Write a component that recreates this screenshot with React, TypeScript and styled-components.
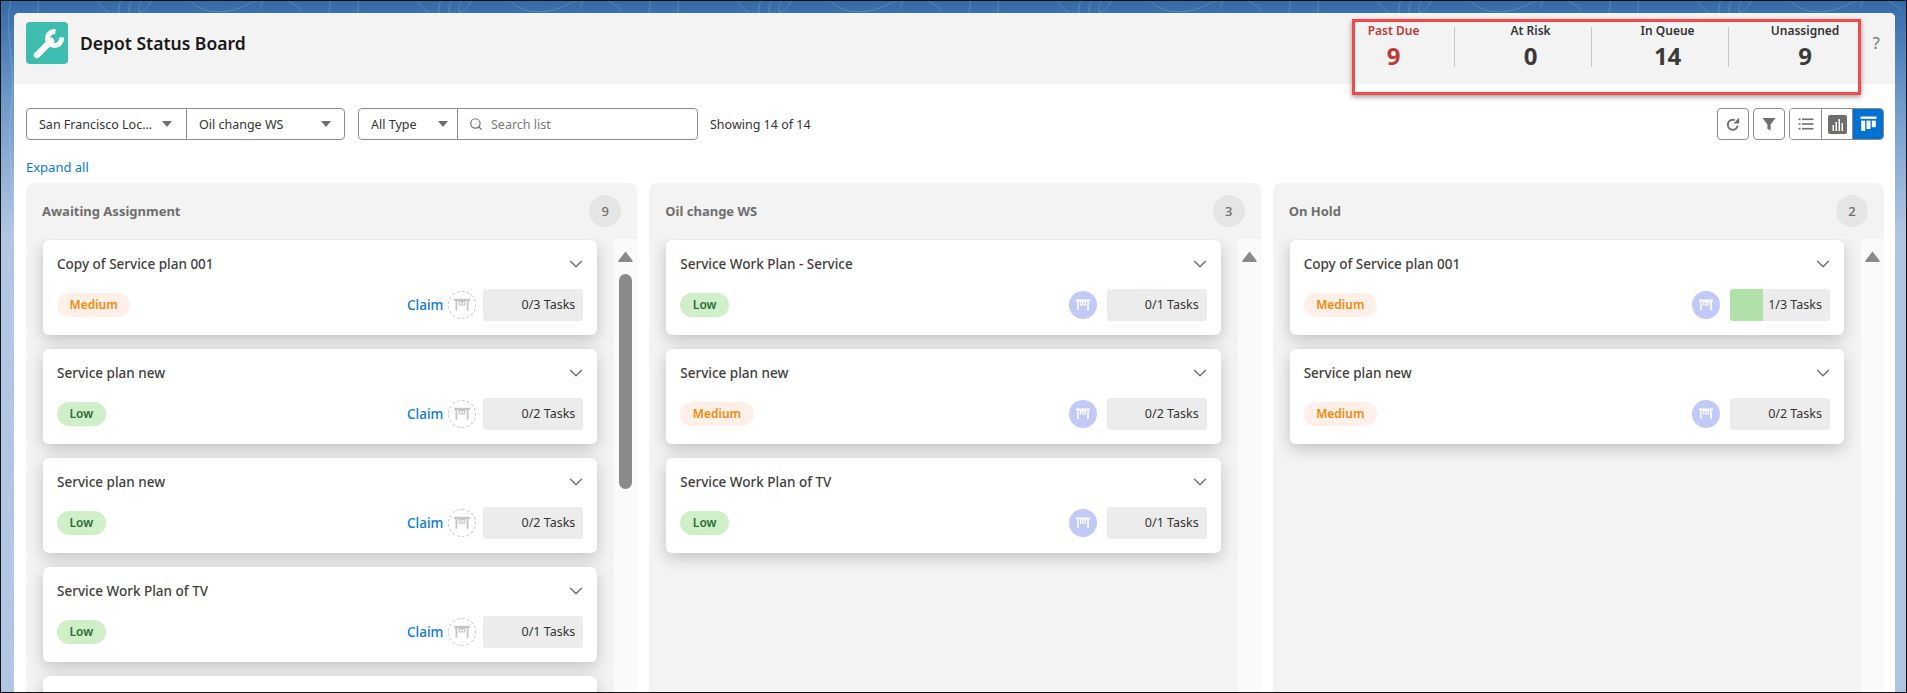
import React from "react";
import styled, { createGlobalStyle } from "styled-components";
import { ChevronDown, Search } from "lucide-react";

const GlobalStyle = createGlobalStyle`
  html, body {
    margin: 0;
    padding: 0;
    height: 693px;
    overflow: hidden;
  }
  * {
    box-sizing: border-box;
  }
  body {
    font-family: "Noto Sans", "Open Sans", Arial, sans-serif;
    color: #333;
  }
`;

const Shell = styled.div`
  position: relative;
  height: 693px;
  overflow: hidden;
  padding: 12px 11px 0 13px;
  border: 1px solid #111;
  background: linear-gradient(180deg, #356ba8 0, #6f99c9 100px, #afc5e2 230px, #afc5e2 100%);
`;

const Contours = styled.svg`
  position: absolute;
  inset: 0;
  width: 100%;
  height: 100%;
`;

const Panel = styled.div`
  position: relative;
  height: 720px;
  background: #fff;
  border-radius: 5px 5px 0 0;
`;

const Header = styled.header`
  height: 71px;
  display: flex;
  align-items: flex-start;
  padding: 9px 15px 9px 12px;
  background: #f3f3f3;
  border-radius: 5px 5px 0 0;
`;

const AppIcon = styled.div`
  width: 42px;
  height: 42px;
  border-radius: 4px;
  background: #3dbdae;
  display: flex;
  align-items: center;
  justify-content: center;
`;

const Title = styled.h1`
  margin: 0 0 0 12px;
  font-size: 17.5px;
  line-height: 42px;
  font-weight: 600;
  color: #181818;
`;

const Stats = styled.div`
  position: relative;
  margin-left: auto;
  display: flex;
  margin-top: 5px;
  height: 40px;
`;

const Annotation = styled.div`
  position: absolute;
  left: 34px;
  top: -8px;
  width: 509px;
  height: 76px;
  border: 3px solid #f4484a;
  box-shadow: 0 2px 5px rgba(0, 0, 0, 0.4);
`;

const Stat = styled.div<{ $last?: boolean }>`
  width: 137px;
  padding-left: 16px;
  text-align: center;
  border-right: ${(p) => (p.$last ? "none" : "1px solid #c9c9c9")};
`;

const StatLabel = styled.div<{ $red?: boolean }>`
  margin-top: -3px;
  font-size: 12px;
  line-height: 14px;
  font-weight: 600;
  color: ${(p) => (p.$red ? "#c23934" : "#333")};
`;

const StatValue = styled.div<{ $red?: boolean }>`
  margin-top: 4px;
  font-size: 24px;
  line-height: 28px;
  font-weight: 700;
  color: ${(p) => (p.$red ? "#c23934" : "#3a3a3a")};
`;

const Help = styled.div`
  margin: 11px 0 0 7px;
  font-size: 17px;
  line-height: 20px;
  color: #777;
`;

const Toolbar = styled.div`
  display: flex;
  align-items: center;
  margin-top: 24px;
  padding: 0 11px 0 12px;
  height: 32px;
`;

const FieldGroup = styled.div`
  display: flex;
  height: 32px;
  border: 1px solid #8c8c8c;
  border-radius: 4px;
  background: #fff;
  & + & {
    margin-left: 13px;
  }
`;

const Select = styled.div<{ $w: number; $pr: number }>`
  width: ${(p) => p.$w}px;
  display: flex;
  align-items: center;
  justify-content: space-between;
  padding: 0 ${(p) => p.$pr}px 0 12px;
  font-size: 12.5px;
  color: #333;
  white-space: nowrap;
  & + & {
    border-left: 1px solid #8c8c8c;
  }
`;

const Caret = styled.span`
  width: 0;
  height: 0;
  border-left: 5px solid transparent;
  border-right: 5px solid transparent;
  border-top: 6px solid #706e6b;
`;

const SearchBox = styled.div`
  width: 240px;
  display: flex;
  align-items: center;
  gap: 8px;
  padding-left: 11px;
  border-left: 1px solid #8c8c8c;
  font-size: 12.5px;
  color: #777;
`;

const Showing = styled.div`
  margin-left: 12px;
  font-size: 12.5px;
  color: #333;
`;

const Actions = styled.div`
  margin-left: auto;
  display: flex;
  gap: 4px;
`;

const IconButton = styled.div`
  width: 32px;
  height: 32px;
  display: flex;
  align-items: center;
  justify-content: center;
  background: #fff;
  border: 1px solid #8c8c8c;
  border-radius: 4px;
  color: #706e6b;
`;

const Segments = styled.div`
  display: flex;
  height: 32px;
  border: 1px solid #8c8c8c;
  border-radius: 4px;
  overflow: hidden;
`;

const Segment = styled.div<{ $active?: boolean }>`
  width: 31px;
  display: flex;
  align-items: center;
  justify-content: center;
  background: ${(p) => (p.$active ? "#0070d2" : "#fff")};
  & + & {
    border-left: 1px solid #8c8c8c;
  }
`;

const ExpandAll = styled.a`
  display: block;
  margin: 17px 0 0 12px;
  font-size: 13px;
  line-height: 20px;
  color: #0b78d6;
`;

const Board = styled.div`
  display: grid;
  grid-template-columns: repeat(3, 1fr);
  gap: 12px;
  margin-top: 6px;
  padding: 0 11px 0 12px;
`;

const Column = styled.section`
  display: flex;
  flex-direction: column;
  border-radius: 8px 8px 0 0;
  height: 520px;
  background: #f3f3f3;
  overflow: hidden;
`;

const ColumnHead = styled.div`
  flex: none;
  height: 56px;
  display: flex;
  align-items: center;
  justify-content: space-between;
  padding: 0 16px;
  font-size: 13px;
  font-weight: 700;
  color: #706e6b;
`;

const Count = styled.div`
  width: 32px;
  height: 32px;
  border-radius: 50%;
  background: #e5e5e5;
  display: flex;
  align-items: center;
  justify-content: center;
  font-size: 13px;
  font-weight: 500;
  color: #706e6b;
`;

const ColumnBody = styled.div`
  flex: 1;
  display: flex;
  min-height: 0;
`;

const CardList = styled.div`
  flex: 1;
  min-width: 0;
  display: flex;
  flex-direction: column;
  gap: 14px;
  padding: 1px 17px 0;
  overflow: hidden;
`;

const ScrollLane = styled.div`
  flex: none;
  position: relative;
  width: 23px;
  background: #fafafa;
`;

const ScrollUp = styled.svg`
  position: absolute;
  left: 4px;
  top: 12px;
`;

const ScrollThumb = styled.div`
  position: absolute;
  left: 5px;
  top: 35px;
  width: 13px;
  height: 215px;
  border-radius: 7px;
  background: #8a8a8a;
`;

const Card = styled.article`
  flex: none;
  height: 95px;
  padding: 14px;
  background: #fff;
  border-radius: 6px;
  box-shadow: 0 5px 16px rgba(0, 0, 0, 0.2);
`;

const CardTop = styled.div`
  display: flex;
  align-items: center;
  justify-content: space-between;
  height: 20px;
  font-size: 13.5px;
  font-weight: 500;
  color: #3e3e3c;
  svg {
    color: #706e6b;
    margin-right: -4px;
  }
`;

const CardBottom = styled.div`
  display: flex;
  align-items: center;
  margin-top: 15px;
  height: 32px;
`;

const Priority = styled.span<{ $level: "Low" | "Medium" }>`
  padding: 0 12.5px;
  height: 24px;
  line-height: 24px;
  border-radius: 12px;
  font-size: 12px;
  font-weight: 600;
  background: ${(p) => (p.$level === "Low" ? "#cfefc8" : "#fef0e8")};
  color: ${(p) => (p.$level === "Low" ? "#2e6b3a" : "#f58a0b")};
`;

const Claim = styled.a`
  margin-left: auto;
  font-size: 13.5px;
  font-weight: 500;
  color: #0b78d6;
`;

const Station = styled.div<{ $assigned?: boolean }>`
  width: 28px;
  height: 28px;
  border-radius: 50%;
  display: flex;
  align-items: center;
  justify-content: center;
  margin-left: ${(p) => (p.$assigned ? "auto" : "5px")};
  margin-right: ${(p) => (p.$assigned ? "10px" : "7px")};
  background: ${(p) => (p.$assigned ? "#c1caf6" : "#fff")};
  border: ${(p) => (p.$assigned ? "none" : "1px dashed #c9c9c9")};
  color: ${(p) => (p.$assigned ? "#fff" : "#c4c4c4")};
`;

const TaskBox = styled.div`
  position: relative;
  width: 100px;
  height: 32px;
  border-radius: 3px;
  overflow: hidden;
  background: #ececec;
`;

const TaskFill = styled.div`
  position: absolute;
  left: 0;
  top: 0;
  bottom: 0;
  background: #afe1a8;
`;

const TaskText = styled.div`
  position: relative;
  padding-right: 8px;
  text-align: right;
  font-size: 12.5px;
  line-height: 32px;
  color: #333;
`;

const WrenchIcon = () => (
  <svg width="42" height="42" viewBox="0 0 42 42" fill="none" stroke="#fff">
    <path d="M11 33 L25 19" strokeWidth="6.5" strokeLinecap="round" />
    <path d="M29.5 9.5 A7 7 0 1 0 35.5 15.5" strokeWidth="5" />
  </svg>
);

const DeskIcon = ({ size = 16 }: { size?: number }) => (
  <svg width={size} height={size} viewBox="0 0 16 16" fill="currentColor">
    <rect x="1" y="2.5" width="14" height="2" />
    <rect x="2.2" y="4.5" width="1.6" height="8.5" />
    <rect x="12.2" y="4.5" width="1.6" height="8.5" />
    <path d="M5 4.5h6v4H5z M6 5.5v2h1.5v-2z M8.5 5.5v2H10v-2z" fillRule="evenodd" />
  </svg>
);

const RefreshIcon = () => (
  <svg width="16" height="16" viewBox="0 0 16 16" fill="none">
    <path d="M9.8 4.2A5 5 0 1 0 12.7 9.6" stroke="#706e6b" strokeWidth="1.9" />
    <path d="M14.2 1.6V7.4H8.4z" fill="#706e6b" />
  </svg>
);

const FunnelIcon = () => (
  <svg width="16" height="16" viewBox="0 0 16 16" fill="#706e6b">
    <path d="M1.5 2h13L9.6 8.5V14.5L6.4 12.8V8.5z" />
  </svg>
);

const ListIcon = () => (
  <svg width="16" height="16" viewBox="0 0 16 16" fill="#706e6b">
    <rect x="0.5" y="2.5" width="2" height="1.6" />
    <rect x="4" y="2.5" width="11.5" height="1.6" />
    <rect x="0.5" y="7.2" width="2" height="1.6" />
    <rect x="4" y="7.2" width="11.5" height="1.6" />
    <rect x="0.5" y="11.9" width="2" height="1.6" />
    <rect x="4" y="11.9" width="11.5" height="1.6" />
  </svg>
);

const ChartIcon = () => (
  <svg width="19" height="19" viewBox="0 0 19 19">
    <rect width="19" height="19" rx="2" fill="#706e6b" />
    <rect x="4.5" y="10" width="1.5" height="6" fill="#fff" />
    <rect x="7.5" y="7" width="1.5" height="9" fill="#fff" />
    <rect x="10.5" y="4" width="1.5" height="12" fill="#fff" />
    <rect x="13.5" y="8" width="1.5" height="8" fill="#fff" />
  </svg>
);

const KanbanIcon = () => (
  <svg width="17" height="16" viewBox="0 0 17 16" fill="#fff">
    <rect x="0.5" y="0.5" width="16" height="2.4" />
    <rect x="1.2" y="4.6" width="4" height="10.4" />
    <rect x="6.5" y="4.6" width="4" height="8.4" />
    <rect x="11.8" y="4.6" width="4" height="6.6" />
  </svg>
);

type Plan = { name: string; level: "Low" | "Medium"; done: number; total: number };

const columns: { title: string; count: number; claim: boolean; more: boolean; plans: Plan[] }[] = [
  {
    title: "Awaiting Assignment",
    count: 9,
    claim: true,
    more: true,
    plans: [
      { name: "Copy of Service plan 001", level: "Medium", done: 0, total: 3 },
      { name: "Service plan new", level: "Low", done: 0, total: 2 },
      { name: "Service plan new", level: "Low", done: 0, total: 2 },
      { name: "Service Work Plan of TV", level: "Low", done: 0, total: 1 },
    ],
  },
  {
    title: "Oil change WS",
    count: 3,
    claim: false,
    more: false,
    plans: [
      { name: "Service Work Plan - Service", level: "Low", done: 0, total: 1 },
      { name: "Service plan new", level: "Medium", done: 0, total: 2 },
      { name: "Service Work Plan of TV", level: "Low", done: 0, total: 1 },
    ],
  },
  {
    title: "On Hold",
    count: 2,
    claim: false,
    more: false,
    plans: [
      { name: "Copy of Service plan 001", level: "Medium", done: 1, total: 3 },
      { name: "Service plan new", level: "Medium", done: 0, total: 2 },
    ],
  },
];

const stats = [
  { label: "Past Due", value: 9, red: true },
  { label: "At Risk", value: 0 },
  { label: "In Queue", value: 14 },
  { label: "Unassigned", value: 9 },
];

const App = () => {
  return (
    <>
      <GlobalStyle />
      <Shell>
        <Contours aria-hidden="true">
          <defs>
            <pattern id="topo" width="320" height="240" patternUnits="userSpaceOnUse">
              <g fill="none" stroke="#fff" strokeOpacity="0.16">
                <path d="M10 0c-8 30 6 60 0 110s8 90 2 130" />
                <path d="M38 0c-6 24 10 40 4 80" />
                <path d="M96 0c14 20 40 24 54 0" />
                <path d="M190 0c10 12 34 16 60 2s40-2 50 8" />
                <path d="M262 0c-6 12-2 22 4 30" strokeDasharray="8 5" />
                <path d="M120 0c-4 8-2 14 2 20" />
                <path d="M130 0c-4 8-2 14 2 20" />
                <path d="M140 0c-4 8-2 14 2 20" />
              </g>
            </pattern>
          </defs>
          <rect width="100%" height="100%" fill="url(#topo)" />
        </Contours>
        <Panel>
          <Header>
            <AppIcon>
              <WrenchIcon />
            </AppIcon>
            <Title>Depot Status Board</Title>
            <Stats>
              {stats.map((s, i) => (
                <Stat key={s.label} $last={i === stats.length - 1}>
                  <StatLabel $red={s.red}>{s.label}</StatLabel>
                  <StatValue $red={s.red}>{s.value}</StatValue>
                </Stat>
              ))}
              <Annotation />
            </Stats>
            <Help>?</Help>
          </Header>
          <Toolbar>
            <FieldGroup>
              <Select $w={159} $pr={14}>
                San Francisco Loc... <Caret />
              </Select>
              <Select $w={158} $pr={13}>
                Oil change WS <Caret />
              </Select>
            </FieldGroup>
            <FieldGroup>
              <Select $w={98} $pr={9}>
                All Type <Caret />
              </Select>
              <SearchBox>
                <Search size={14} color="#706e6b" />
                Search list
              </SearchBox>
            </FieldGroup>
            <Showing>Showing 14 of 14</Showing>
            <Actions>
              <IconButton>
                <RefreshIcon />
              </IconButton>
              <IconButton>
                <FunnelIcon />
              </IconButton>
              <Segments>
                <Segment>
                  <ListIcon />
                </Segment>
                <Segment>
                  <ChartIcon />
                </Segment>
                <Segment $active>
                  <KanbanIcon />
                </Segment>
              </Segments>
            </Actions>
          </Toolbar>
          <ExpandAll>Expand all</ExpandAll>
          <Board>
            {columns.map((col) => (
              <Column key={col.title}>
                <ColumnHead>
                  {col.title}
                  <Count>{col.count}</Count>
                </ColumnHead>
                <ColumnBody>
                  <CardList>
                    {col.plans.map((plan, i) => (
                      <Card key={i}>
                        <CardTop>
                          {plan.name}
                          <ChevronDown size={22} strokeWidth={1.5} />
                        </CardTop>
                        <CardBottom>
                          <Priority $level={plan.level}>{plan.level}</Priority>
                          {col.claim && <Claim>Claim</Claim>}
                          <Station $assigned={!col.claim}>
                            <DeskIcon size={col.claim ? 18 : 16} />
                          </Station>
                          <TaskBox>
                            {plan.done > 0 && (
                              <TaskFill style={{ width: `${(plan.done / plan.total) * 100}%` }} />
                            )}
                            <TaskText>
                              {plan.done}/{plan.total} Tasks
                            </TaskText>
                          </TaskBox>
                        </CardBottom>
                      </Card>
                    ))}
                    {/* next card starts right at the bottom of the window */}
                    {col.more && <Card />}
                  </CardList>
                  <ScrollLane>
                    <ScrollUp width="15" height="11" viewBox="0 0 15 11" fill="#8a8a8a">
                      <path d="M7.5 0.5 14.5 9.5a1 1 0 0 1-.8 1.5H1.3a1 1 0 0 1-.8-1.5z" />
                    </ScrollUp>
                    {col.more && <ScrollThumb />}
                  </ScrollLane>
                </ColumnBody>
              </Column>
            ))}
          </Board>
        </Panel>
      </Shell>
    </>
  );
};

export default App;
